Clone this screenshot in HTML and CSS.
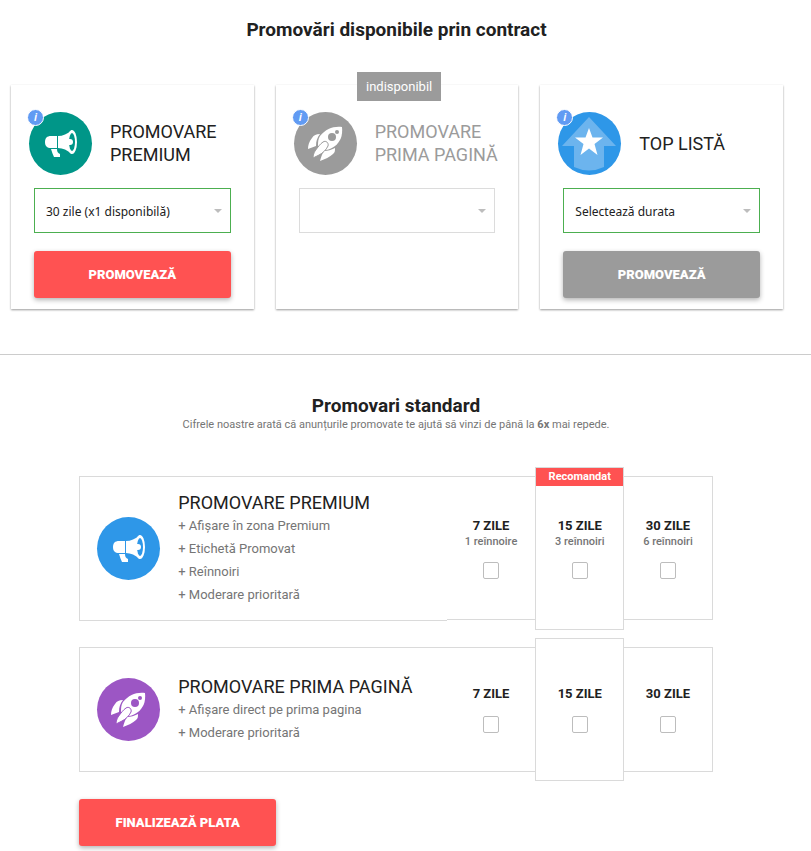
FILE: index.html
```
<!DOCTYPE html>
<html lang="ro">
<head>
  <meta charset="UTF-8" />
  <meta name="viewport" content="width=device-width, initial-scale=1.0"/>
  <title>Promovări</title>
  <link rel="stylesheet" href="styles.css">
</head>
<body>

  <!-- shared icons -->
  <svg class="sprite" aria-hidden="true">
    <symbol id="icon-horn" viewBox="0 0 63 63">
      <path d="M28 24v12h-6c-4 0-6-2-6-6s2-6 6-6z" fill="#fff"/>
      <path d="M22 37h6c0 3 1 4 3 5v3h-6c-1-2-2-5-3-8z" fill="#fff"/>
      <path d="M29 24c5 0 9-2 14-6v24c-5-4-9-6-14-6z" fill="#fff"/>
      <ellipse cx="43" cy="30" rx="5" ry="12" fill="#fff"/>
      <ellipse class="window" cx="43" cy="30" rx="3" ry="9"/>
      <path d="M39 27h2a3 3 0 0 1 0 6h-2z" fill="#fff"/>
    </symbol>
    <symbol id="icon-rocket" viewBox="0 0 63 63">
      <path d="M48 15c1 9-2 15-7 19-3 2-6 4-10 4h-4l-3-4c0-4 0-7 2-10 6-7 13-10 22-9z" fill="#fff"/>
      <path d="M26 22c-4 0-6 1-8 4-3 4-4 7-4 11l8-3c0-5 1-8 4-12z" fill="#fff"/>
      <path d="M41 36c0 3 0 4-2 6-3 3-8 5-13 7 1-4 2-7 4-10 4 0 7-1 11-3z" fill="#fff"/>
      <path class="flame" d="M29 30c3-2 6 1 5 4-2 4-5 7-9 9l-6 3c0-3 1-5 2-7 3-4 5-7 8-9z" fill="#fff"/>
      <circle class="window" cx="38" cy="25" r="4"/>
      <circle class="window" cx="43" cy="20" r="2"/>
    </symbol>
    <symbol id="icon-top" viewBox="0 0 63 63">
      <path d="M31 5l27 29H46v21q-15 7-30 0V34H4z" fill="#6cb4ee"/>
      <path d="M31 16l3.500 9.500H45l-8.500 6.500 3 11-8.500-6.500-8.500 6.500 3-11L17 25.500h10.500z" fill="#fff"/>
    </symbol>
  </svg>

  <section class="contract">
    <h2>Promovări disponibile prin contract</h2>

    <div class="cards">
      <div class="card">
        <div class="card-head">
          <div class="icon teal"><svg><use href="#icon-horn"/></svg><span class="info">i</span></div>
          <h3>PROMOVARE PREMIUM</h3>
        </div>
        <select aria-label="Durata promovare premium">
          <option>30 zile (x1 disponibilă)</option>
        </select>
        <button class="btn" type="button">PROMOVEAZĂ</button>
      </div>

      <div class="card unavailable">
        <span class="badge">indisponibil</span>
        <div class="card-head">
          <div class="icon gray"><svg><use href="#icon-rocket"/></svg><span class="info">i</span></div>
          <h3>PROMOVARE PRIMA PAGINĂ</h3>
        </div>
        <select aria-label="Durata promovare prima pagină" disabled>
          <option></option>
        </select>
      </div>

      <div class="card">
        <div class="card-head">
          <div class="icon blue"><svg><use href="#icon-top"/></svg><span class="info">i</span></div>
          <h3>TOP LISTĂ</h3>
        </div>
        <select aria-label="Durata top listă">
          <option>Selectează durata</option>
        </select>
        <button class="btn btn-gray" type="button">PROMOVEAZĂ</button>
      </div>
    </div>
  </section>

  <section class="standard">
    <h2>Promovari standard</h2>
    <p class="subtitle">Cifrele noastre arată că anunțurile promovate te ajută să vinzi de până la <b>6x</b> mai repede.</p>

    <div class="plans">
      <div class="plan premium">
        <div class="details">
          <div class="icon blue"><svg><use href="#icon-horn"/></svg></div>
          <div>
            <h3>PROMOVARE PREMIUM</h3>
            <ul>
              <li>+ Afișare în zona Premium</li>
              <li>+ Etichetă Promovat</li>
              <li>+ Reînnoiri</li>
              <li>+ Moderare prioritară</li>
            </ul>
          </div>
        </div>
        <label class="option">
          <strong>7 ZILE</strong>
          <span>1 reînnoire</span>
          <input type="checkbox">
        </label>
        <label class="option featured">
          <em>Recomandat</em>
          <strong>15 ZILE</strong>
          <span>3 reînnoiri</span>
          <input type="checkbox">
        </label>
        <label class="option">
          <strong>30 ZILE</strong>
          <span>6 reînnoiri</span>
          <input type="checkbox">
        </label>
      </div>

      <div class="plan">
        <div class="details">
          <div class="icon purple"><svg><use href="#icon-rocket"/></svg></div>
          <div>
            <h3>PROMOVARE PRIMA PAGINĂ</h3>
            <ul>
              <li>+ Afișare direct pe prima pagina</li>
              <li>+ Moderare prioritară</li>
            </ul>
          </div>
        </div>
        <label class="option">
          <strong>7 ZILE</strong>
          <input type="checkbox">
        </label>
        <label class="option featured">
          <strong>15 ZILE</strong>
          <input type="checkbox">
        </label>
        <label class="option">
          <strong>30 ZILE</strong>
          <input type="checkbox">
        </label>
      </div>

      <button class="btn" type="button">FINALIZEAZĂ PLATA</button>
    </div>
  </section>

</body>
</html>
```
FILE: styles.css
```
*, *::before, *::after {
  box-sizing: border-box;
}

body {
  margin: 0;
  background: #fff;
  color: #212121;
  font-family: Roboto, sans-serif;
}

h2, h3, p, ul {
  margin: 0;
  padding: 0;
}

h2 {
  font-size: 19px;
  line-height: 24px;
  font-weight: 700;
  text-align: center;
}

h3 {
  font-size: 18px;
  line-height: 23px;
  font-weight: 400;
}

.sprite {
  position: absolute;
  width: 0;
  height: 0;
}

/* contract cards */
.contract {
  padding: 18px 18px 45px 0;
}

.cards {
  display: grid;
  grid-template-columns: repeat(3, 1fr);
  gap: 22px;
  padding: 0 10px 0 11px;
  margin-top: 43px;
}

.card {
  position: relative;
  min-height: 224px;
  padding: 26px 23px 11px;
  box-shadow: 0 1px 2px rgba(0, 0, 0, .4);
}

.card-head {
  display: flex;
  align-items: center;
  gap: 18px;
  height: 64px;
  margin: 0 -20px 13px -5px;
}

.card-head h3 {
  flex: 1;
}

.unavailable h3 {
  color: #9b9b9b;
}

.badge {
  position: absolute;
  top: -13px;
  left: 50%;
  margin-left: -40px;
  padding: 0 9px;
  background: #9b9b9b;
  color: #fff;
  font-size: 13px;
  line-height: 29px;
}

.icon {
  position: relative;
  flex: none;
  width: 63px;
  height: 63px;
  border-radius: 50%;
}

.icon svg {
  display: block;
  width: 63px;
  height: 63px;
}

.window {
  fill: currentColor;
}

.flame {
  stroke: currentColor;
  stroke-width: 1px;
}

.teal {
  background: #009688;
  color: #009688;
}

.gray {
  background: #9b9b9b;
  color: #9b9b9b;
}

.blue {
  background: #2e97e8;
  color: #2e97e8;
}

.purple {
  background: #9c56c4;
  color: #9c56c4;
}

.info {
  position: absolute;
  top: -3px;
  left: -2px;
  width: 17px;
  height: 17px;
  border: 1px solid #fff;
  border-radius: 50%;
  background: #619bf3;
  color: #fff;
  font: italic 700 10px/15px "Open Sans", sans-serif;
  text-align: center;
}

select {
  display: block;
  width: 100%;
  height: 45px;
  padding: 1px 11px 0;
  border: 1px solid #4caf50;
  border-radius: 0;
  appearance: none;
  background: #fff url("data:image/svg+xml,%3Csvg xmlns='http://www.w3.org/2000/svg' width='8' height='4'%3E%3Cpath d='M0 0h8L4 4z' fill='%23bdbdbd'/%3E%3C/svg%3E") no-repeat right 8px center;
  color: #212121;
  font: 12px "Noto Sans", sans-serif;
}

select:disabled {
  border-color: #dcdcdc;
  opacity: 1;
}

.btn {
  display: block;
  width: 197px;
  height: 47px;
  border: 0;
  border-radius: 3px;
  background: #ff5252;
  color: #fff;
  font: 900 13px Roboto, sans-serif;
  box-shadow: 0 2px 5px rgba(0, 0, 0, .3);
  cursor: pointer;
}

.card .btn {
  width: 100%;
  margin-top: 18px;
}

.btn-gray {
  background: #9b9b9b;
}

/* standard promotions */
.standard {
  padding: 39px 19px 5px 0;
  border-top: 1px solid #ccc;
}

.subtitle {
  color: #757575;
  font-size: 11px;
  line-height: 14px;
  text-align: center;
}

.plans {
  width: 80%;
  margin: 44px auto 0;
}

.plan {
  display: flex;
  min-height: 125px;
  margin-bottom: 27px;
}

.premium {
  min-height: 145px;
  margin-bottom: 26px;
}

.details {
  flex: 1;
  display: flex;
  align-items: center;
  gap: 18px;
  padding-left: 17px;
  border: 1px solid #dadada;
  border-right: 0;
}

ul {
  list-style: none;
  color: #757575;
  font-size: 13px;
  line-height: 23px;
}

.option {
  position: relative;
  display: flex;
  flex-direction: column;
  align-items: center;
  justify-content: center;
  width: 14%;
  border: 1px solid #dadada;
  border-width: 1px 0;
}

.premium .option {
  margin-bottom: 1px;
}

.option:last-child {
  border-right-width: 1px;
}

.plan .option.featured {
  margin: -9px 0;
  border-width: 1px;
}

.option em {
  position: absolute;
  top: 0;
  left: 0;
  right: 0;
  background: #ff5252;
  color: #fff;
  font: 700 11px/18px Roboto, sans-serif;
  text-align: center;
}

.option strong {
  font-size: 13px;
  line-height: 16px;
  font-weight: 700;
}

.option span {
  color: #757575;
  font-size: 11px;
  line-height: 16px;
  font-weight: 500;
}

.option input {
  appearance: none;
  width: 16px;
  height: 17px;
  margin: 14px 0 0;
  border: 1px solid #bdbdbd;
  border-radius: 2px;
}

.option span + input {
  margin-top: 12px;
}

.option input:checked {
  background: #4caf50;
}
```
